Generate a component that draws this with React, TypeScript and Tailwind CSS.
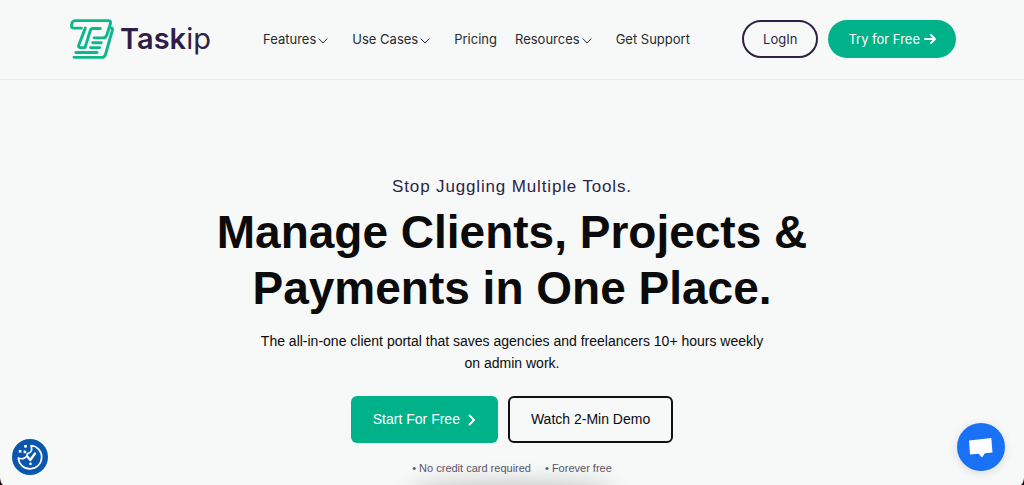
import React from "react";

const navItems = [
  { label: "Features", menu: true },
  { label: "Use Cases", menu: true },
  { label: "Pricing", menu: false },
  { label: "Resources", menu: true },
  { label: "Get Support", menu: false },
];

function LogoMark() {
  return (
    <svg viewBox="29 29 135 123" className="h-10 w-11" fill="none" stroke="#0cb88b" strokeWidth="9" strokeLinecap="round" strokeLinejoin="round" aria-hidden="true">
      <path d="M64 57H41Q32 57 34 47L35 42Q37 34 46 34H145Q156 34 153 44L142 78Q139 87 130 87H103" />
      <path d="M76 57 56 109Q53 117 60 117H75L91 65Q93 58 99 58H122" />
      <path d="M153 56Q161 56 159 64L138 138Q135 147 126 147H41" />
      <path d="M99 102H125M92 117H120M47 132H112" />
    </svg>
  );
}

function ChevronDown() {
  return (
    <svg viewBox="0 0 10 6" className="mt-1 h-[6px] w-[10px]" fill="none" stroke="currentColor" strokeLinecap="round" strokeLinejoin="round" aria-hidden="true">
      <path d="M1 .8 5 5 9 .8" />
    </svg>
  );
}

export default function App() {
  return (
    <div className="relative min-h-screen overflow-hidden bg-[#f7f9f8] font-['Liberation_Sans',sans-serif] text-[#0b0b0b]">
      <header className="flex items-center justify-between border-b border-[#e6edf0] pt-[19px] pr-[68px] pb-5 pl-[70px] font-[Inter,sans-serif] text-[13px] leading-5">
        <a href="#" className="flex items-center gap-[6px] text-[#2e1f47]">
          <LogoMark />
          <span className="text-[29px] leading-10 font-semibold">
            Task<span className="font-normal">ip</span>
          </span>
        </a>
        <nav className="flex items-center gap-[18px] text-[#272a2e]">
          {navItems.map((item) =>
            item.menu ? (
              <button key={item.label} type="button" className="flex items-center gap-[2px] pr-[6px]">
                {item.label}
                <ChevronDown />
              </button>
            ) : (
              <a key={item.label} href="#">
                {item.label}
              </a>
            ),
          )}
        </nav>
        <div className="flex items-center gap-[10px]">
          <a href="#" className="rounded-full border-2 border-[#2e1f47] px-[19px] py-[7px] text-[#2e1f47]">
            LogIn
          </a>
          <a href="#" className="flex items-center gap-1 rounded-full bg-[#00b289] px-5 py-[9px] text-white">
            Try for Free
            <svg viewBox="0 0 12 10" className="h-[10px] w-3" fill="none" stroke="currentColor" strokeWidth="1.8" strokeLinecap="round" strokeLinejoin="round" aria-hidden="true">
              <path d="M1 5H11M7 1 11 5 7 9" />
            </svg>
          </a>
        </div>
      </header>

      <main className="flex flex-col items-center px-6 pt-[95px] text-center">
        <p className="text-[17px] leading-6 tracking-wider text-[#2e1f47]">Stop Juggling Multiple Tools.</p>
        <h1 className="mt-[5px] max-w-[640px] text-[46px] leading-[56px] font-bold">
          Manage Clients, Projects &amp; Payments in One Place.
        </h1>
        <p className="mt-[14px] max-w-[520px] text-sm leading-[22px]">
          The all-in-one client portal that saves agencies and freelancers 10+ hours weekly on admin work.
        </p>
        <div className="mt-[22px] flex gap-[10px] text-sm leading-[23px]">
          <a href="#" className="flex items-center gap-2 rounded-md bg-[#00b289] px-[22px] py-3 text-white">
            Start For Free
            <svg viewBox="0 0 8 12" className="h-3 w-2" fill="none" stroke="currentColor" strokeWidth="2" strokeLinecap="round" strokeLinejoin="round" aria-hidden="true">
              <path d="M1.5 1.5 6 6 1.5 10.5" />
            </svg>
          </a>
          <a href="#" className="rounded-md border-2 border-[#111111] px-[21px] py-[10px]">
            Watch 2-Min Demo
          </a>
        </div>
        <ul className="mt-4 flex gap-[14px] text-[11px] leading-[18px] text-[#5b566b]">
          <li>• No credit card required</li>
          <li>• Forever free</li>
        </ul>
      </main>

      <div className="pointer-events-none absolute -bottom-3 left-1/2 h-4 w-[210px] -translate-x-1/2 rounded-[50%] bg-black/20 blur-[9px]" />

      <button type="button" aria-label="Cookie preferences" className="absolute bottom-[10px] left-3 size-9 rounded-full bg-[#0a57ad]">
        <svg viewBox="0 0 36 36" className="size-9" fill="none" stroke="#ffffff" strokeWidth="1.7" strokeLinecap="round" strokeLinejoin="round" aria-hidden="true">
          <path d="M19 6.5A11.7 11.7 0 1 1 6.3 19Q9.5 20.5 12.5 19Q15.5 17.5 15.5 14.5Q18.5 14 19.5 11.5Q20 9 19 6.5Z" />
          <path d="M15.8 18 18.3 21 23 14.5" strokeWidth="2.3" />
          <path d="M18.5 24.8V25" strokeWidth="2.5" />
          <g fill="#ffffff" stroke="none">
            <rect x="12.2" y="6" width="2.6" height="2.6" />
            <rect x="6.8" y="11" width="2.6" height="2.6" />
            <rect x="11.6" y="11.6" width="2.6" height="2.6" />
          </g>
        </svg>
      </button>

      <button type="button" aria-label="Open chat" className="absolute right-[19px] bottom-[14px] size-12 rounded-full bg-[#1972f5] shadow-[0_2px_10px_rgba(0,0,0,0.12)]">
        <svg viewBox="0 0 48 48" className="size-12" fill="#ffffff" aria-hidden="true">
          <path d="M12 17.5 34.3 15 35.5 29.5 28 30.2 25 34.5 21.5 30.8 13 31.5Z" />
        </svg>
      </button>

      <svg viewBox="0 0 4 8" className="absolute bottom-0 left-0 h-2 w-1" fill="#1b0b10" aria-hidden="true">
        <path d="M0 0Q0 5 3 8H0Z" />
      </svg>
      <svg viewBox="0 0 4 8" className="absolute right-0 bottom-0 h-2 w-1" fill="#1b0b10" aria-hidden="true">
        <path d="M4 0Q4 5 1 8H4Z" />
      </svg>
    </div>
  );
}
